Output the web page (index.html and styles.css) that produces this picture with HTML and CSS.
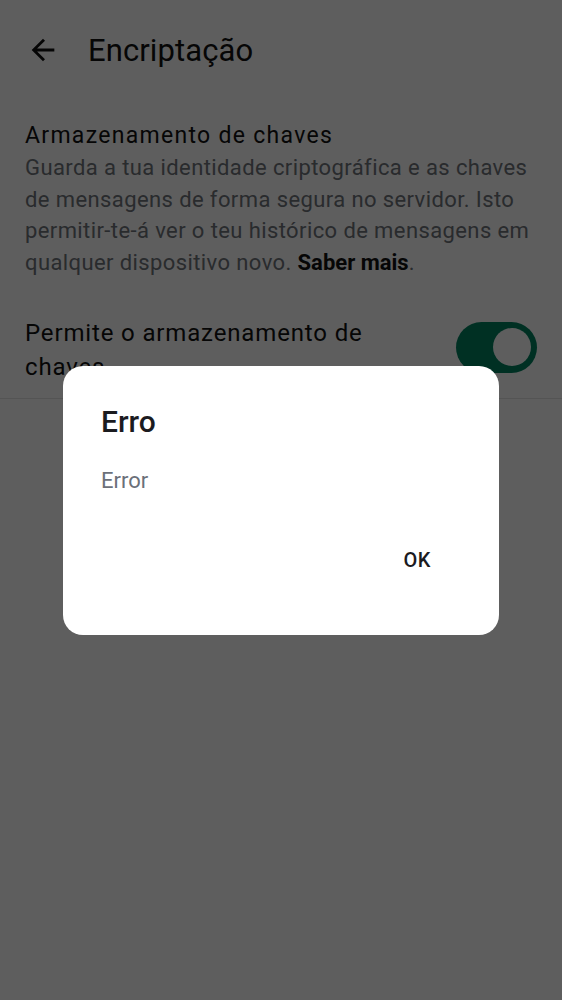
FILE: index.html
```html
<!DOCTYPE html>
<html lang="pt">
<head>
<meta charset="utf-8">
<link rel="stylesheet" href="styles.css">
</head>
<body>
<div class="screen">
  <header class="appbar">
    <button class="back" aria-label="Voltar">
      <svg width="34" height="34" viewBox="0 0 24 24"><path d="M20 11H7.83l5.59-5.59L12 4l-8 8 8 8 1.41-1.41L7.83 13H20v-2z" fill="#111"/></svg>
    </button>
    <h1 class="title">Encriptação</h1>
  </header>
  <section class="info">
    <h2 class="info-title">Armazenamento de chaves</h2>
    <p class="info-desc">Guarda a tua identidade criptográfica e as chaves de mensagens de forma segura no servidor. Isto permitir-te-á ver o teu histórico de mensagens em qualquer dispositivo novo. <b>Saber mais</b>.</p>
  </section>
  <div class="row">
    <span class="row-label">Permite o armazenamento de chaves</span>
    <span class="switch"><span class="thumb"></span></span>
  </div>
</div>
<div class="scrim">
  <div class="dialog" role="dialog">
    <h3 class="dlg-title">Erro</h3>
    <p class="dlg-text">Error</p>
    <div class="dlg-actions"><button class="dlg-btn">OK</button></div>
  </div>
</div>
</body>
</html>
```
FILE: styles.css
```css
html, body {
  margin: 0;
  padding: 0;
  background: #ffffff;
  font-family: Roboto, "Noto Sans", sans-serif;
}
.screen {
  height: 1000px;
  background: #ffffff;
}
.appbar {
  display: flex;
  align-items: center;
  height: 100px;
  padding-left: 26px;
  gap: 28px;
}
.back {
  border: 0;
  background: none;
  padding: 0;
  width: 34px;
  height: 34px;
  display: flex;
}
.title {
  margin: 0;
  font-size: 31px;
  font-weight: 400;
  color: #111;
  letter-spacing: 0.1px;
}
.info {
  padding: 20px 25px 0;
}
.info-title {
  margin: 0;
  font-size: 23px;
  font-weight: 400;
  color: #111;
  line-height: 32px;
  letter-spacing: 1.3px;
}
.info-desc {
  margin: 0;
  font-size: 22px;
  line-height: 31.5px;
  color: #6f747b;
  letter-spacing: 0.4px;
}
.info-desc b {
  color: #111;
  font-weight: 700;
  letter-spacing: 0;
}
.row {
  display: flex;
  align-items: center;
  justify-content: space-between;
  padding: 38px 25px 14px;
  border-bottom: 1px solid #e4e4e4;
}
.row-label {
  width: 390px;
  font-size: 24px;
  line-height: 34px;
  color: #111;
  letter-spacing: 0.85px;
}
.switch {
  width: 81px;
  height: 51px;
  border-radius: 26px;
  background: #008261;
  display: flex;
  align-items: center;
  justify-content: flex-end;
  padding-right: 6px;
  box-sizing: border-box;
  margin-top: -6px;
}
.thumb {
  width: 38px;
  height: 38px;
  border-radius: 50%;
  background: #ffffff;
}
.scrim {
  position: fixed;
  inset: 0;
  background: rgba(0, 0, 0, 0.63);
  display: flex;
  align-items: center;
  justify-content: center;
}
.dialog {
  width: 436px;
  height: 269px;
  box-sizing: border-box;
  background: #fff;
  border-radius: 20px;
  padding: 36px 38px 0;
  display: flex;
  flex-direction: column;
}
.dlg-title {
  margin: 0;
  font-size: 30px;
  font-weight: 500;
  color: #1b1b1f;
  line-height: 40px;
}
.dlg-text {
  margin: 25px 0 0;
  font-size: 22px;
  line-height: 28px;
  color: #6b7079;
}
.dlg-actions {
  display: flex;
  justify-content: flex-end;
  margin-top: 53px;
}
.dlg-btn {
  border: 0;
  background: none;
  font-family: Roboto, "Noto Sans", sans-serif;
  font-size: 20px;
  font-weight: 500;
  color: #1b1b1f;
  padding: 0 30px 0 0;
  letter-spacing: 0.5px;
}
```
